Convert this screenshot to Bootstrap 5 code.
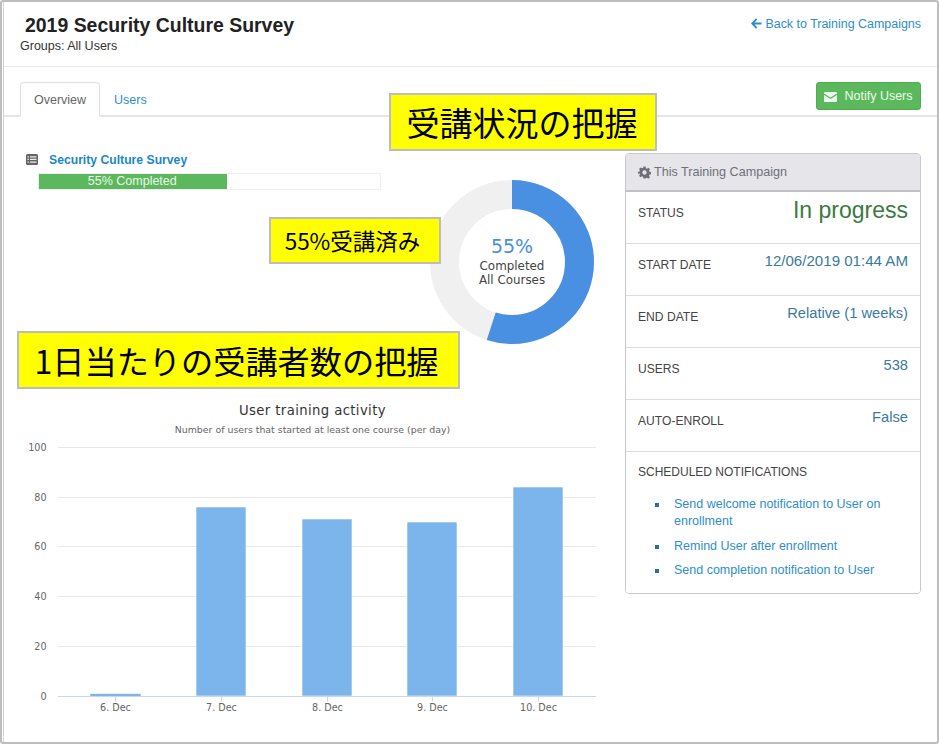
<!DOCTYPE html>
<html lang="ja">
<head>
<meta charset="utf-8">
<title>2019 Security Culture Survey</title>
<link href="https://cdn.jsdelivr.net/npm/bootstrap@5.3.0/dist/css/bootstrap.min.css" rel="stylesheet">
<style>
html,body{height:100%;margin:0;background:#fff}
body{font-family:"Liberation Sans",Arial,sans-serif;color:#333;font-size:13px;overflow:hidden}
.frame{position:relative;width:939px;height:744px;border:2px solid #bdbdbd;border-radius:3px;overflow:hidden}
.frame-in{height:100%;border-left:1px solid #d4d4d4;margin-left:1px}
.top-head{height:65px;padding:11px 16px 0 16px;border-bottom:1px solid #e9e9e9}
.page-title{font-size:19.45px;font-weight:700;color:#222;margin:0 0 0 5px;line-height:24px}
.group-line{font-size:12.5px;color:#333;line-height:16px;margin-top:1px}
.back-link{font-size:12.45px;color:#2e8ecb;text-decoration:none;line-height:16px;margin-top:3px}
.back-link svg{vertical-align:-1px}
.tab-row{height:50px;padding:15px 16px 0 16px;border-bottom:2px solid #e6e6e6}
.tab-row .nav-tabs{border:0;font-size:12.5px;height:34px}
.tab-row .nav-link{padding:0 13px;height:35px;line-height:35px;color:#2e8ecb;border-radius:4px 4px 0 0;border:1px solid transparent}
.tab-row .nav-link.active{color:#666;border-color:#e2e2e2 #e2e2e2 #fff;background:#fff}
.notify-btn{--bs-btn-bg:#5cb85c;--bs-btn-border-color:#4fae4f;font-size:12.5px;height:28px;width:105px;padding:1px 0 0;margin-top:0;border-radius:3px;color:#eef8ee;display:flex;align-items:center;justify-content:center;gap:7px}
.main-area{padding:0 16px 0 14px}
.left-pane{width:606px;flex:none}
.course-block{width:355px;margin-left:8px;padding-top:29px;flex:none}
.course-link{font-size:12.2px;font-weight:700;color:#1b87c9;text-decoration:none;line-height:14px}
.course-head{gap:11px;height:27px}
.bar-track{--bs-progress-bg:#fff;--bs-progress-bar-bg:#5cb85c;height:17px;margin-left:12px;border:1px solid #eee;border-radius:0;font-size:12.5px}
.bar-track .progress-bar{margin:-1px 0 -1px -1px;height:17px;color:#eaf6ea}
.donut-svg{margin:63px 0 0 49px;flex:none;display:block}
.chart-svg{display:block;margin-top:56px;margin-left:-1px}
.chart-svg text,.donut-svg text{font-family:"DejaVu Sans",sans-serif}
.camp-card{width:296px;margin-top:36px;margin-left:auto;border-color:#c9c9cd;border-radius:4px;--bs-card-inner-border-radius:3px}
.camp-card .card-header{height:38px;background:#e6e6ea;border-bottom:2px solid #c0c0c6;color:#6f6f78;font-size:12.6px;padding:0 12px;display:flex;align-items:center;gap:3px}
.stat-row{height:52px;padding:0 12px;display:flex;justify-content:space-between;border-color:#ddd}
.stat-label{font-size:12.1px;color:#444;margin-top:13px;line-height:16px}
.stat-val{font-size:14.7px;color:#3b7a9c;margin-top:8px;line-height:18px}
.stat-big{font-size:23px;color:#3c7a41;line-height:24px;margin-top:6px}
.stat-date{font-size:15.1px}
.sched{padding:12px 12px 0;height:141px}
.sched-title{font-size:12px;color:#444;line-height:16px}
.sched-list{list-style:none;margin:16px 0 0;padding:0 0 0 36px;font-size:12.5px;line-height:17px}
.sched-list li{position:relative;margin-bottom:7.6px}
.sched-list li::before{content:"";position:absolute;left:-19px;top:7px;width:4px;height:4px;background:#2f6f96}
.sched-list a{color:#2e8ecb;text-decoration:none}
.note-box{position:absolute;background:#ff0;border:2px solid #bdbdbd;color:#000;font-family:"Noto Sans CJK JP",sans-serif;display:flex;align-items:center;justify-content:center;white-space:nowrap;line-height:1}
.note-a{left:387px;top:91px;width:268px;height:58px;font-size:33px;padding-right:2px}
.note-b{left:267px;top:215px;width:172px;height:47px;font-size:22.5px;padding-right:5px}
.note-c{left:15px;top:329px;width:443px;height:58px;font-size:32.2px;padding-right:4px}
</style>
</head>
<body>
<div class="frame">
<div class="frame-in">
  <div class="top-head d-flex justify-content-between align-items-start">
    <div>
      <h1 class="page-title">2019 Security Culture Survey</h1>
      <div class="group-line">Groups: All Users</div>
    </div>
    <a href="#" class="back-link"><svg width="11" height="11" viewBox="0 0 12 12"><path d="M6.2 1 1.4 6l4.8 5M1.8 6H11.5" fill="none" stroke="#2e8ecb" stroke-width="2.1"/></svg> Back to Training Campaigns</a>
  </div>
  <div class="tab-row d-flex justify-content-between align-items-start">
    <ul class="nav nav-tabs">
      <li class="nav-item"><a class="nav-link active" href="#">Overview</a></li>
      <li class="nav-item"><a class="nav-link" href="#">Users</a></li>
    </ul>
    <button type="button" class="btn btn-success notify-btn"><svg width="13" height="10" viewBox="0 0 13 10"><path d="M1 0h11a1 1 0 0 1 1 1v.6L6.5 5.6 0 1.6V1a1 1 0 0 1 1-1zM0 3l6.5 4L13 3v6a1 1 0 0 1-1 1H1a1 1 0 0 1-1-1z" fill="#eef8ee"/></svg>Notify Users</button>
  </div>
  <div class="main-area d-flex align-items-start">
    <div class="left-pane">
      <div class="d-flex align-items-start">
        <div class="course-block">
          <div class="d-flex align-items-center course-head">
            <svg width="12" height="11" viewBox="0 0 12 11"><rect width="12" height="11" rx="1.5" fill="#666"/><path d="M1.5 2.2h1.4v1.3H1.500zM4 2.200h6.500v1.300H4zM1.500 4.800h1.400v1.300H1.500zM4 4.800h6.500v1.300H4zM1.500 7.400h1.400v1.300H1.500zM4 7.400h6.500v1.300H4z" fill="#eee"/></svg>
            <a href="#" class="course-link">Security Culture Survey</a>
          </div>
          <div class="progress bar-track"><div class="progress-bar" style="width:55.3%">55% Completed</div></div>
        </div>
        <svg class="donut-svg" width="164" height="164" viewBox="0 0 164 164">
          <circle cx="82" cy="82" r="67.5" fill="none" stroke="#f0f0f0" stroke-width="29"/>
          <circle cx="82" cy="82" r="67.500" fill="none" stroke="#4a90e2" stroke-width="29" pathLength="100" stroke-dasharray="55 45" transform="rotate(-90 82 82)"/>
          <text x="82" y="73" text-anchor="middle" font-size="19" fill="#4a90e2">55%</text>
          <text x="82" y="90" text-anchor="middle" font-size="11.900" fill="#444">Completed</text>
          <text x="82" y="104" text-anchor="middle" font-size="11.900" fill="#444">All Courses</text>
        </svg>
      </div>
      <svg class="chart-svg" width="600" height="330" viewBox="17 0 600 330">
        <text x="312.500" y="15" text-anchor="middle" font-size="13.200" letter-spacing=".4" fill="#333">User training activity</text>
        <text x="312.500" y="33" text-anchor="middle" font-size="9.400" fill="#666">Number of users that started at least one course (per day)</text>
        <g stroke="#e8e8e8" stroke-width="1">
          <path d="M58 47.500H596M58 97.500H596M58 146.500H596M58 196.500H596M58 246.500H596"/>
        </g>
        <g fill="#7cb5ec" stroke="#fff" stroke-width=".6">
          <rect x="90" y="293.500" width="51" height="3"/>
          <rect x="196" y="107" width="50" height="189"/>
          <rect x="302" y="119" width="50" height="177"/>
          <rect x="407" y="122" width="50" height="174"/>
          <rect x="513" y="87" width="50" height="209"/>
        </g>
        <path d="M58 296.500H596M115.500 296.500v5M221.500 296.500v5M327.500 296.500v5M432.500 296.500v5M538.500 296.500v5" stroke="#ccd6eb" fill="none"/>
        <g font-size="9.600" fill="#666" text-anchor="end">
          <text x="46.500" y="51">100</text>
          <text x="46.500" y="101">80</text>
          <text x="46.500" y="150">60</text>
          <text x="46.500" y="200">40</text>
          <text x="46.500" y="250">20</text>
          <text x="46.500" y="300">0</text>
        </g>
        <g font-size="9.600" fill="#666" text-anchor="middle">
          <text x="115.500" y="311">6. Dec</text>
          <text x="221.500" y="311">7. Dec</text>
          <text x="327.500" y="311">8. Dec</text>
          <text x="432.500" y="311">9. Dec</text>
          <text x="538.500" y="311">10. Dec</text>
        </g>
      </svg>
    </div>
    <div class="card camp-card flex-grow-0 flex-shrink-0">
      <div class="card-header"><svg width="13" height="13" viewBox="0 0 24 24"><path fill="#6f6f78" fill-rule="evenodd" d="M10 1h4l.6 3.100 2 .8L19.300 3.200l2.800 2.800-1.700 2.700.8 2 3.100.6v4l-3.100.6-.8 2 1.700 2.700-2.800 2.800-2.700-1.700-2 .8L14 23h-4l-.6-3.100-2-.8-2.700 1.700-2.800-2.800 1.700-2.700-.8-2L-.3 14.700v-4l3.100-.6.800-2L1.900 5.400 4.700 2.600l2.700 1.700 2-.8zM12 8a4 4 0 1 0 0 8 4 4 0 0 0 0-8z"/></svg> This Training Campaign</div>
      <div class="list-group list-group-flush">
        <div class="list-group-item stat-row"><span class="stat-label">STATUS</span><span class="stat-big">In progress</span></div>
        <div class="list-group-item stat-row"><span class="stat-label">START DATE</span><span class="stat-val stat-date">12/06/2019 01:44 AM</span></div>
        <div class="list-group-item stat-row"><span class="stat-label">END DATE</span><span class="stat-val">Relative (1 weeks)</span></div>
        <div class="list-group-item stat-row"><span class="stat-label">USERS</span><span class="stat-val">538</span></div>
        <div class="list-group-item stat-row"><span class="stat-label">AUTO-ENROLL</span><span class="stat-val">False</span></div>
        <div class="list-group-item sched">
          <div class="sched-title">SCHEDULED NOTIFICATIONS</div>
          <ul class="sched-list">
            <li><a href="#">Send welcome notification to User on enrollment</a></li>
            <li><a href="#">Remind User after enrollment</a></li>
            <li><a href="#">Send completion notification to User</a></li>
          </ul>
        </div>
      </div>
    </div>
  </div>
</div>
<div class="note-box note-a">受講状況の把握</div>
<div class="note-box note-b">55%受講済み</div>
<div class="note-box note-c">1日当たりの受講者数の把握</div>
</div>
</body>
</html>
